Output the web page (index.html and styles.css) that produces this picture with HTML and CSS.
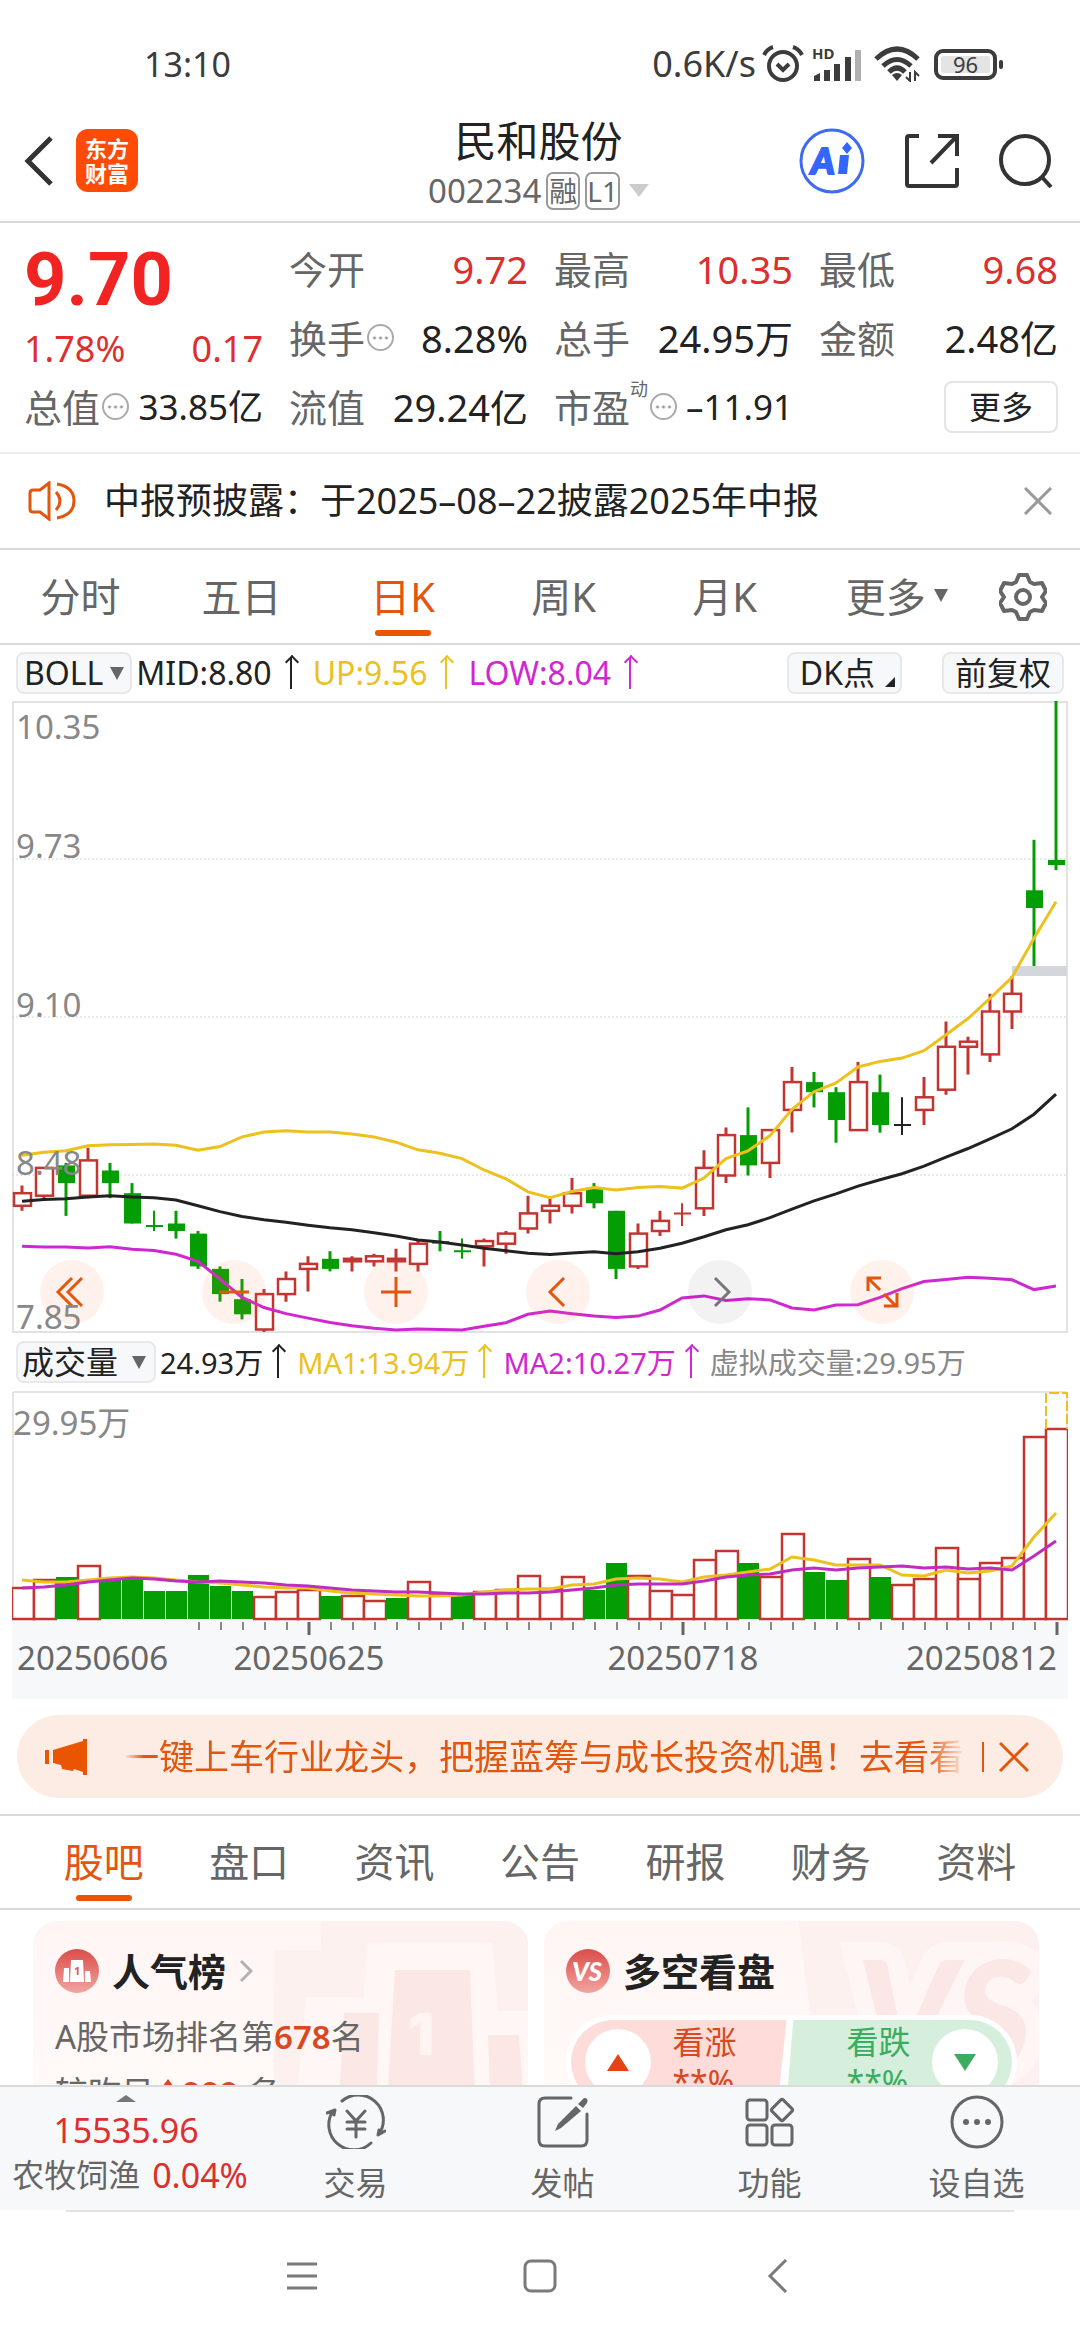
FILE: index.html
```html
<!DOCTYPE html>
<html lang="zh-CN">
<head>
    <meta charset="UTF-8">
    <meta name="viewport" content="width=device-width, initial-scale=1.0">
    <title>民和股份 002234</title>
    <link rel="stylesheet" href="styles.css">
</head>
<body>
    <div class="status-bar">
        <span class="clock">13:10</span>
        <span class="speed">0.6K/s</span>
        <svg class="alarm" width="42" height="40" viewBox="0 0 42 40" fill="none" stroke="#3c3c3c" stroke-width="4">
            <circle cx="21" cy="22" r="14"/>
            <path d="M15 20l6 6 6-6M2 11q3-6 9-8M40 11q-3-6-9-8"/>
        </svg>
        <svg class="signal" width="50" height="36" viewBox="0 0 50 36">
            <text x="0" y="13" font-size="15" font-weight="700" fill="#3c3c3c">HD</text>
            <path d="M2 35v-5l6-3v8zM12 35v-11h6v11zM22 35v-17h6v17zM33 35v-24h6v24z" fill="#3c3c3c"/>
            <path d="M43 35v-31h6v31z" fill="#b0b0b0"/>
        </svg>
        <svg class="wifi" width="48" height="36" viewBox="0 0 48 36" fill="none" stroke="#3c3c3c" stroke-width="5">
            <path d="M2 13q21-20 42 0M9 20q14-13 28 0M15 26q8-8 16 0"/>
            <path d="M23 35l-5-6q5-4 10 0z" fill="#3c3c3c" stroke="none"/>
            <path d="M36 26v9l-4-4M41 35v-9l4 4" stroke-width="2"/>
        </svg>
        <span class="battery">96</span>
    </div>

    <header class="header">
        <div class="header-left">
            <button class="icon-btn" aria-label="返回">
                <svg width="30" height="50" viewBox="0 0 30 50" fill="none" stroke="#333" stroke-width="5"><path d="M27 2L4 25l23 23"/></svg>
            </button>
            <a class="app-logo" href="#">东方<br>财富</a>
        </div>
        <div class="stock">
            <h1>民和股份</h1>
            <div class="stock-code">002234 <span class="tag">融</span><span class="tag">L1</span><i class="caret-down big"></i></div>
        </div>
        <div class="header-right">
            <button class="icon-btn" aria-label="AI">
                <svg width="66" height="66" viewBox="0 0 66 66">
                    <circle cx="33" cy="33" r="31" fill="#fff" stroke="#3d6bf2" stroke-width="3"/>
                    <text x="12" y="46" font-size="36" font-weight="900" font-style="italic" font-family="Lato" fill="#3366ff" stroke="#3366ff" stroke-width="2">A</text>
                    <path d="M41 27h9l-2 19h-9zM48 14l5 6-5 6-5-6z" fill="#3366ff"/>
                </svg>
            </button>
            <button class="icon-btn" aria-label="分享">
                <svg width="54" height="54" viewBox="0 0 54 54" fill="none" stroke="#333" stroke-width="4"><path d="M14 2H4q-2 0-2 2v46q0 2 2 2h46q2 0 2-2V34M33 2h19v20M52 2L26 29"/></svg>
            </button>
            <button class="icon-btn" aria-label="搜索">
                <svg width="54" height="54" viewBox="0 0 54 54" fill="none" stroke="#333" stroke-width="4"><circle cx="26" cy="26" r="24"/><path d="M42 42l10 11"/></svg>
            </button>
        </div>
    </header>

    <section class="quote">
        <div class="quote-col first">
            <strong class="price">9.70</strong>
            <div class="item up change"><span>1.78%</span><span>0.17</span></div>
            <div class="item small"><label>总值<i class="dots"></i></label><span>33.85亿</span></div>
        </div>
        <div class="quote-col">
            <div class="item"><label>今开</label><span class="up">9.72</span></div>
            <div class="item"><label>换手<i class="dots"></i></label><span>8.28%</span></div>
            <div class="item"><label>流值</label><span>29.24亿</span></div>
        </div>
        <div class="quote-col">
            <div class="item"><label>最高</label><span class="up">10.35</span></div>
            <div class="item"><label>总手</label><span>24.95万</span></div>
            <div class="item pe"><label>市盈<sup>动</sup><i class="dots"></i></label><span>–11.91</span></div>
        </div>
        <div class="quote-col">
            <div class="item"><label>最低</label><span class="up">9.68</span></div>
            <div class="item"><label>金额</label><span>2.48亿</span></div>
            <div class="item"><button class="more">更多</button></div>
        </div>
    </section>

    <div class="notice">
        <svg width="48" height="40" viewBox="0 0 48 40" fill="none" stroke="#e2560e" stroke-width="3">
            <path d="M21 2v36l-9-7H5q-3 0-3-3V12q0-3 3-3h7zM28 11q8 9 0 18M29 3q17 3 17 17t-17 17"/>
        </svg>
        <a href="#">中报预披露：于2025–08–22披露2025年中报</a>
        <button class="icon-btn" aria-label="关闭">
            <svg width="28" height="28" viewBox="0 0 28 28" stroke="#999" stroke-width="3"><path d="M1 1l26 26M27 1L1 27"/></svg>
        </button>
    </div>

    <nav class="periods">
        <button>分时</button>
        <button>五日</button>
        <button class="active">日K</button>
        <button>周K</button>
        <button>月K</button>
        <button>更多<i class="caret-down"></i></button>
        <button aria-label="设置">
            <svg width="48" height="48" viewBox="0 0 48 48" fill="none" stroke="#666" stroke-width="4" stroke-linejoin="round">
                <path d="M20 2h8l3 7 4 2 8-1 4 8-4 6 4 6-4 8-8-1-4 2-3 7h-8l-3-7-4-2-8 1-4-8 4-6-4-6 4-8 8 1 4-2z"/>
                <circle cx="24" cy="24" r="7"/>
            </svg>
        </button>
    </nav>

    <section class="chart">
        <div class="legend">
            <button class="chip">BOLL<i class="caret-down"></i></button>
            <span class="val">MID:8.80<i class="arrow"></i></span>
            <span class="val yellow">UP:9.56<i class="arrow"></i></span>
            <span class="val purple">LOW:8.04<i class="arrow"></i></span>
            <button class="chip dk">DK点<i class="corner"></i></button>
            <button class="chip">前复权</button>
        </div>
        <div class="kline">
            <svg id="kline" viewBox="0 0 1056 632"></svg>
            <div class="tools">
                <button aria-label="最早"><svg viewBox="0 0 64 64"><path d="M32 18L18 32l14 14M42 18L28 32l14 14"/></svg></button>
                <button aria-label="缩小"><svg viewBox="0 0 64 64"><path d="M17 32h30"/></svg></button>
                <button aria-label="放大"><svg viewBox="0 0 64 64"><path d="M17 32h30M32 17v30"/></svg></button>
                <button aria-label="左移"><svg viewBox="0 0 64 64"><path d="M38 18L24 32l14 14"/></svg></button>
                <button aria-label="右移" class="off"><svg viewBox="0 0 64 64"><path d="M27 18l14 14-14 14"/></svg></button>
                <button aria-label="全屏"><svg viewBox="0 0 64 64"><path d="M18 31V18h13M18 18l12 12M47 33v13H34M46 46L34 34"/></svg></button>
            </div>
            <svg id="scale" viewBox="0 0 1056 632"></svg>
        </div>
        <div class="legend volume-legend">
            <button class="chip">成交量<i class="caret-down"></i></button>
            <span class="val">24.93万<i class="arrow"></i></span>
            <span class="val yellow">MA1:13.94万<i class="arrow"></i></span>
            <span class="val purple">MA2:10.27万<i class="arrow"></i></span>
            <span class="val gray">虚拟成交量:29.95万</span>
        </div>
        <svg id="volume" class="volume" viewBox="0 0 1056 308"></svg>
    </section>

    <div class="promo">
        <svg width="42" height="36" viewBox="0 0 42 36" fill="#ea5504">
            <path d="M0 11h4v14H0zM8 11L38 2V0h4v36h-4v-3l-9-3-1 2-11-2-1-4-8-2z"/>
        </svg>
        <a href="#">一键上车行业龙头，把握蓝筹与成长投资机遇！去看看</a>
        <button class="icon-btn" aria-label="关闭">
            <svg width="30" height="30" viewBox="0 0 30 30" stroke="#e2560e" stroke-width="3"><path d="M1 1l28 28M29 1L1 29"/></svg>
        </button>
    </div>

    <nav class="sections">
        <button class="active">股吧</button>
        <button>盘口</button>
        <button>资讯</button>
        <button>公告</button>
        <button>研报</button>
        <button>财务</button>
        <button>资料</button>
    </nav>

    <main class="cards">
        <article class="card">
            <svg class="card-bg" width="495" height="200" viewBox="0 0 495 200">
                <path d="M288 0h207v200H241V29h47z" fill="#fdf1ef"/>
                <path d="M335 22h124l6 68h30v110H262l11-124h58z" fill="#fef7f5"/>
                <path d="M362 49h75l6 151h-90zM311 92h35l-3 108h-38zM455 114h31l6 86h-34z" fill="#fbe8e5"/>
                <text x="375" y="134" font-size="58" font-weight="900" font-family="Inter" fill="#fef4f2">1</text>
            </svg>
            <h2>
                <svg width="44" height="44" viewBox="0 0 44 44">
                    <circle cx="22" cy="22" r="22" fill="url(#badge)"/>
                    <path d="M16 11h12l1 22H15zM9 19h5v14H8zM30 22h5l1 11h-6z" fill="#fff"/>
                    <text x="19" y="26" font-size="11" font-weight="700" fill="#dc5a54">1</text>
                    <defs><linearGradient id="badge" x2="0" y2="1"><stop stop-color="#da4c48"/><stop offset="1" stop-color="#f2a5a0"/></linearGradient></defs>
                </svg>
                人气榜
                <svg width="14" height="24" viewBox="0 0 14 24" fill="none" stroke="#b5b0af" stroke-width="3"><path d="M2 2l10 10L2 22"/></svg>
            </h2>
            <p>A股市场排名第<b>678</b>名</p>
            <p>较昨日<i class="rise"></i><b>999</b> 名</p>
        </article>
        <article class="card">
            <svg class="card-bg" width="495" height="200" viewBox="0 0 495 200">
                <path d="M254 0h241v200H280z" fill="#fdf1ef"/>
                <text x="312" y="150" font-size="152" font-weight="900" font-style="italic" font-family="Lato" fill="#fbe8e6" stroke="#fef6f5" stroke-width="36" paint-order="stroke">VS</text>
            </svg>
            <h2>
                <svg width="44" height="44" viewBox="0 0 44 44">
                    <circle cx="22" cy="22" r="22" fill="url(#badge)"/>
                    <text x="6" y="32" font-size="26" font-weight="900" font-style="italic" font-family="Lato" fill="#fff">VS</text>
                </svg>
                多空看盘
            </h2>
            <div class="vote">
                <button class="bull"><span class="knob"><i class="tri"></i></span><span>看涨<br>**%</span></button>
                <button class="bear"><span>看跌<br>**%</span><span class="knob"><i class="tri"></i></span></button>
            </div>
        </article>
    </main>

    <footer class="toolbar">
        <a class="index" href="#">
            <i class="caret-up"></i>
            <span class="up">15535.96</span>
            <span class="sector">农牧饲渔<span class="up">0.04%</span></span>
        </a>
        <button>
            <svg width="60" height="54" viewBox="0 0 60 54" fill="none" stroke="#666" stroke-width="3" stroke-linecap="round" stroke-linejoin="round">
                <path d="M16 6A25 25 0 0 1 53 39M45 48A25 25 0 0 1 7 16M1 18l8-3-1 5M59 36l-7 4 1-5M21 16l9 10 9-10M30 26v16M21 27h18M21 34h18"/>
            </svg>
            交易
        </button>
        <button>
            <svg width="54" height="54" viewBox="0 0 54 54" fill="none" stroke="#666" stroke-width="3" stroke-linecap="round">
                <path d="M35 3H9q-6 0-6 6v36q0 6 6 6h36q6 0 6-6V19"/>
                <path d="M42 9l6-6q5 0 3 5l-4 5zM40 11l5 5-20 17-6 3 3-7z" fill="#666" stroke="none"/>
            </svg>
            发帖
        </button>
        <button>
            <svg width="54" height="54" viewBox="0 0 54 54" fill="none" stroke="#666" stroke-width="3" stroke-linejoin="round">
                <rect x="4" y="5" width="20" height="20" rx="3"/><rect x="4" y="30" width="20" height="20" rx="3"/><rect x="29" y="30" width="20" height="20" rx="3"/>
                <rect x="31" y="7" width="16" height="16" rx="2" transform="rotate(45 39 15)"/>
            </svg>
            功能
        </button>
        <button>
            <svg width="54" height="54" viewBox="0 0 54 54" fill="none" stroke="#666" stroke-width="3">
                <circle cx="27" cy="27" r="25"/>
                <g fill="#666" stroke="none"><circle cx="16" cy="27" r="3"/><circle cx="27" cy="27" r="3"/><circle cx="38" cy="27" r="3"/></g>
            </svg>
            设自选
        </button>
    </footer>

    <div class="system-nav">
        <button aria-label="任务"><svg width="34" height="34" viewBox="0 0 34 34" fill="none" stroke="#7a7a7a" stroke-width="3"><path d="M2 5h30M2 17h30M2 29h30"/></svg></button>
        <button aria-label="主页"><svg width="34" height="34" viewBox="0 0 34 34" fill="none" stroke="#7a7a7a" stroke-width="3"><rect x="2" y="2" width="30" height="30" rx="6"/></svg></button>
        <button aria-label="后退"><svg width="34" height="34" viewBox="0 0 34 34" fill="none" stroke="#7a7a7a" stroke-width="3"><path d="M25 1L9 17l16 16"/></svg></button>
    </div>

    <script src="chart.js"></script>
</body>
</html>
```
FILE: styles.css
```css
* {
    box-sizing: border-box;
}
body {
    margin: 0;
    height: 100vh;
    display: flex;
    flex-direction: column;
    overflow: hidden;
    background: #fff;
    color: #222;
    font-family: "Noto Sans", "Noto Sans CJK SC", sans-serif;
    font-size: 38px;
    line-height: 1;
}
body > * {
    flex-shrink: 0;
}
button {
    font: inherit;
    color: inherit;
    background: none;
    border: 0;
    padding: 0;
    cursor: pointer;
}
a {
    color: inherit;
    text-decoration: none;
}
svg {
    display: block;
    flex-shrink: 0;
}
h1, h2, p {
    margin: 0;
    font-weight: 400;
}
.icon-btn {
    display: flex;
}
.up {
    color: #dc2f2e;
}
.yellow {
    color: #ecc11e;
}
.purple {
    color: #cf28cf;
}
.gray {
    color: #888;
}

/* small triangles */
.caret-down, .caret-up {
    display: inline-block;
    border: 7px solid transparent;
    border-top: 13px solid #666;
    border-bottom: 0;
}
.caret-down.big {
    border-width: 13px 10px 0;
    border-top-color: #ccc;
    margin-left: 4px;
}
.caret-up {
    border-width: 0 10px 7px;
    border-bottom: 7px solid #777;
}

.status-bar {
    display: flex;
    align-items: center;
    height: 108px;
    padding: 20px 77px 0 144px;
    color: #3c3c3c;
    font-size: 36px;
}
.clock {
    flex: 1;
    font-size: 34px;
}
.alarm {
    margin: 0 8px 0 6px;
}
.wifi {
    margin: 0 12px;
}
.battery {
    position: relative;
    width: 63px;
    height: 31px;
    margin-right: 6px;
    border: 4px solid #3c3c3c;
    border-radius: 9px;
    background: #e4e4e4;
    box-shadow: inset 0 0 0 3px #fff;
    font-size: 22px;
    line-height: 23px;
    text-align: center;
}
.battery::after {
    content: "";
    position: absolute;
    right: -10px;
    top: 7px;
    width: 4px;
    height: 9px;
    border-radius: 2px;
    background: #3c3c3c;
}

.header {
    display: grid;
    grid-template-columns: 1fr auto 1fr;
    align-items: center;
    height: 115px;
    padding: 0 27px 8px 24px;
    border-bottom: 2px solid #dadada;
}
.header-left, .header-right {
    display: flex;
    align-items: center;
}
.header-left {
    gap: 22px;
}
.header-right {
    justify-content: flex-end;
    gap: 40px;
}
.app-logo {
    width: 62px;
    height: 63px;
    padding-top: 7px;
    border-radius: 12px;
    background: #ff4b05;
    color: #fff;
    font-size: 22px;
    font-weight: 700;
    line-height: 25px;
    text-align: center;
}
.stock {
    padding-top: 4px;
    text-align: center;
}
.stock h1 {
    font-size: 42px;
    line-height: 56px;
}
.stock-code {
    display: flex;
    align-items: center;
    gap: 5px;
    height: 44px;
    color: #666;
    font-size: 33px;
}
.tag {
    min-width: 34px;
    height: 38px;
    border: 2px solid #999;
    border-radius: 7px;
    font-size: 28px;
    line-height: 34px;
    text-align: center;
}

.quote {
    display: grid;
    grid-template-columns: repeat(4, 1fr);
    gap: 26px;
    padding: 11px 22px 11px 24px;
    border-bottom: 2px solid #ececec;
}
.item {
    display: flex;
    justify-content: space-between;
    align-items: center;
    height: 69px;
    white-space: nowrap;
}
.item label {
    display: flex;
    align-items: center;
    color: #666;
}
.item sup {
    align-self: flex-start;
    margin-top: -8px;
    font-size: 18px;
    line-height: 18px;
}
.item.small span, .item.pe span {
    font-size: 35px;
}
.first {
    display: flex;
    flex-direction: column;
}
.price {
    height: 92px;
    color: #f22323;
    font-family: Roboto, sans-serif;
    font-size: 74px;
    line-height: 92px;
}
.change {
    height: 46px;
    font-size: 36px;
}
.dots {
    width: 27px;
    height: 27px;
    margin-left: 2px;
    border: 2px solid #aaa;
    border-radius: 50%;
    background: radial-gradient(circle, #999 1px, transparent 2px) center / 6px 6px content-box;
    padding: 9px 3px 8px 3px;
}
.more {
    width: 114px;
    height: 52px;
    margin-left: auto;
    border: 2px solid #e4e4e4;
    border-radius: 8px;
    font-size: 32px;
}

.notice {
    display: flex;
    align-items: center;
    height: 96px;
    padding: 0 28px;
    border-bottom: 2px solid #dadada;
    font-size: 36px;
}
.notice a {
    flex: 1;
    margin-left: 28px;
}

.periods, .sections {
    display: grid;
    height: 95px;
    border-bottom: 2px solid #dadada;
    color: #666;
    font-size: 40px;
}
.periods {
    grid-template-columns: repeat(6, 17fr) 12fr;
}
.periods button, .sections button {
    position: relative;
    display: flex;
    align-items: center;
    justify-content: center;
}
.periods .caret-down {
    position: absolute;
    right: 18px;
    top: 39px;
}
.active {
    color: #e2560e;
}
.active::after {
    content: "";
    position: absolute;
    bottom: 7px;
    left: calc(50% - 28px);
    width: 56px;
    height: 6px;
    border-radius: 3px;
    background: #ea5504;
}

.chart {
    padding: 0 12px;
}
.legend {
    display: flex;
    align-items: center;
    height: 56px;
    padding: 0 4px;
    font-size: 32px;
    white-space: nowrap;
}
.chip {
    display: flex;
    align-items: center;
    height: 42px;
    padding: 0 11px;
    border: 2px solid #e6e8ec;
    border-radius: 8px;
    background: #f7f8fa;
}
.chip:first-child {
    padding: 0 6px;
    margin-right: 4px;
}
.chip .caret-down {
    margin-left: 7px;
}
.chip.dk {
    margin: 0 40px 0 auto;
    padding: 0 5px 0 11px;
}
.corner {
    align-self: flex-end;
    margin: 0 0 5px 10px;
    border: 5px solid transparent;
    border-right-color: #222;
    border-bottom-color: #222;
}
.val {
    display: flex;
    align-items: center;
}
.arrow {
    position: relative;
    width: 2px;
    height: 32px;
    margin: 0 21px 0 18px;
    background: currentColor;
}
.arrow::before {
    content: "";
    position: absolute;
    left: -3px;
    top: 0;
    width: 8px;
    height: 8px;
    border: solid currentColor;
    border-width: 2px 0 0 2px;
    transform: rotate(45deg);
}
.volume-legend {
    height: 58px;
}
.volume-legend .val {
    font-size: 29px;
}
.volume-legend .chip:first-child {
    padding: 0 8px 0 4px;
}
.volume-legend .caret-down {
    margin-left: 14px;
}
.volume-legend .arrow {
    margin: 0 18px 0 14px;
}
.kline {
    position: relative;
}
.kline > svg, .volume {
    width: 100%;
}
#scale {
    position: absolute;
    top: 0;
    left: 0;
    pointer-events: none;
}
.tools {
    position: absolute;
    left: 28px;
    bottom: 9px;
    display: flex;
    gap: 98px;
}
.tools button {
    width: 64px;
    height: 64px;
    border-radius: 50%;
    background: rgba(255, 120, 60, .1);
}
.tools path {
    fill: none;
    stroke: #e2560e;
    stroke-width: 3;
}
.tools .off {
    background: rgba(0, 0, 0, .05);
}
.tools .off path {
    stroke: #777;
}

.promo {
    display: flex;
    align-items: center;
    height: 83px;
    margin: 16px 17px;
    padding: 0 34px 0 28px;
    border-radius: 42px;
    background: #fcece3;
    color: #e2560e;
    font-size: 35px;
}
.promo a {
    flex: 1;
    margin: 0 16px 0 37px;
    white-space: nowrap;
    overflow: hidden;
    line-height: 50px;
    -webkit-mask-image: linear-gradient(90deg, transparent, #000 20px, #000 calc(100% - 40px), transparent);
    mask-image: linear-gradient(90deg, transparent, #000 20px, #000 calc(100% - 40px), transparent);
}
.promo .icon-btn {
    padding-left: 15px;
    border-left: 2px solid #e2560e;
}

.sections {
    grid-template-columns: repeat(7, 1fr);
    height: 96px;
    padding: 0 31px;
    border-top: 2px solid #dadada;
}

.cards {
    flex: 1 1 0;
    min-height: 0;
    overflow: hidden;
    display: grid;
    grid-template-columns: 1fr 1fr;
    gap: 16px;
    padding: 11px 41px 0 33px;
}
.card {
    position: relative;
    height: 200px;
    padding: 28px 22px;
    border-radius: 24px;
    background: linear-gradient(#fff6f4, #fffaf9);
    overflow: hidden;
}
.card-bg {
    position: absolute;
    top: 0;
    right: 0;
}
.card h2 {
    position: relative;
    display: flex;
    align-items: center;
    gap: 13px;
    height: 44px;
    font-size: 38px;
    font-weight: 600;
}
.card p {
    position: relative;
    color: #666;
    font-size: 33px;
    line-height: 56px;
}
.card h2 + p {
    margin-top: 16px;
}
.card b {
    color: #d9481f;
    font-weight: 600;
}
.rise {
    display: inline-block;
    margin: 0 2px;
    border: 12px solid transparent;
    border-top: 0;
    border-bottom: 16px solid #d9481f;
    vertical-align: 10px;
}
.vote {
    position: relative;
    display: flex;
    height: 94px;
    margin-top: 22px;
    border: 5px solid #fff;
    border-radius: 47px;
    background: #fff;
    overflow: hidden;
    font-size: 32px;
}
.vote button {
    flex: 1;
    display: flex;
    align-items: center;
    justify-content: space-between;
    padding: 0 14px;
    line-height: 40px;
    text-align: left;
}
.bull {
    background: #fddcd9;
    color: #d9481f;
    clip-path: polygon(0 0, 100% 0, 96% 100%, 0 100%);
}
.bear {
    background: #d6efdc;
    color: #3bad60;
    clip-path: polygon(3% 0, 100% 0, 100% 100%, 0 100%);
}
.vote .bull {
    padding-right: 50px;
}
.vote .bear {
    padding-left: 60px;
}
.knob {
    display: grid;
    place-items: center;
    width: 66px;
    height: 66px;
    border-radius: 50%;
    background: #fff;
}
.tri {
    border: 11px solid transparent;
    border-top: 0;
    border-bottom: 17px solid #e44413;
}
.bear .tri {
    border-top: 17px solid #3bad60;
    border-bottom: 0;
}

.toolbar {
    display: grid;
    grid-template-columns: 252px repeat(4, 1fr);
    height: 125px;
    border-top: 2px solid #dadada;
    background: #f7f8fa;
    color: #666;
    font-size: 32px;
}
.toolbar button {
    display: flex;
    flex-direction: column;
    align-items: center;
    gap: 18px;
    padding-top: 8px;
}
.index {
    display: flex;
    flex-direction: column;
    align-items: center;
    gap: 11px;
    padding-top: 8px;
    white-space: nowrap;
}
.index .up {
    font-size: 34px;
}
.sector {
    display: flex;
    align-items: center;
    gap: 12px;
    padding-left: 8px;
}

.system-nav {
    display: flex;
    justify-content: center;
    gap: 204px;
    height: 130px;
    margin: 0 66px;
    border-top: 2px solid #e2e2e2;
}
```
FILE: chart.js
```js
// [type, body top, body bottom, high, low, volume, volume colour]
const days = [
    ['r', 8.40, 8.35, 8.43, 8.33, 4.12, 'r'],
    ['r', 8.50, 8.39, 8.50, 8.37, 5.17, 'r'],
    ['g', 8.51, 8.44, 8.52, 8.31, 5.53, 'g'],
    ['r', 8.53, 8.39, 8.58, 8.38, 6.97, 'r'],
    ['g', 8.49, 8.44, 8.52, 8.38, 5.35, 'g'],
    ['g', 8.40, 8.28, 8.44, 8.28, 5.44, 'g'],
    ['g', 8.27, 8.27, 8.33, 8.25, 3.73, 'g'],
    ['g', 8.28, 8.25, 8.33, 8.22, 3.73, 'g'],
    ['g', 8.24, 8.11, 8.25, 8.10, 5.83, 'g'],
    ['g', 8.10, 8.00, 8.11, 7.97, 4.34, 'g'],
    ['g', 7.98, 7.92, 8.06, 7.90, 3.68, 'g'],
    ['r', 8.00, 7.86, 8.02, 7.85, 2.85, 'r'],
    ['r', 8.06, 8.00, 8.09, 7.97, 3.60, 'r'],
    ['r', 8.12, 8.10, 8.15, 8.01, 3.86, 'r'],
    ['g', 8.14, 8.10, 8.17, 8.09, 3.07, 'g'],
    ['r', 8.14, 8.13, 8.15, 8.09, 2.98, 'r'],
    ['r', 8.15, 8.13, 8.16, 8.11, 2.37, 'r'],
    ['r', 8.14, 8.13, 8.18, 8.09, 2.72, 'g'],
    ['r', 8.20, 8.12, 8.21, 8.09, 4.87, 'r'],
    ['g', 8.21, 8.20, 8.25, 8.17, 3.20, 'r'],
    ['g', 8.17, 8.17, 8.22, 8.14, 3.16, 'g'],
    ['r', 8.21, 8.19, 8.22, 8.11, 3.51, 'r'],
    ['r', 8.24, 8.20, 8.25, 8.16, 3.86, 'r'],
    ['r', 8.32, 8.26, 8.39, 8.24, 5.66, 'r'],
    ['r', 8.35, 8.33, 8.38, 8.28, 3.99, 'r'],
    ['r', 8.40, 8.35, 8.46, 8.32, 5.53, 'r'],
    ['g', 8.42, 8.36, 8.44, 8.34, 3.86, 'g'],
    ['g', 8.33, 8.10, 8.33, 8.06, 7.41, 'g'],
    ['r', 8.24, 8.11, 8.28, 8.10, 5.66, 'r'],
    ['r', 8.29, 8.25, 8.33, 8.23, 3.68, 'r'],
    ['r', 8.32, 8.32, 8.36, 8.27, 3.16, 'r'],
    ['r', 8.50, 8.34, 8.57, 8.31, 7.76, 'r'],
    ['r', 8.63, 8.47, 8.66, 8.44, 8.95, 'r'],
    ['g', 8.63, 8.51, 8.74, 8.47, 7.41, 'g'],
    ['r', 8.65, 8.52, 8.65, 8.46, 5.53, 'r'],
    ['r', 8.84, 8.73, 8.90, 8.64, 11.18, 'r'],
    ['g', 8.84, 8.80, 8.88, 8.74, 6.14, 'g'],
    ['g', 8.80, 8.69, 8.82, 8.60, 5.13, 'g'],
    ['r', 8.84, 8.65, 8.92, 8.65, 7.89, 'r'],
    ['g', 8.80, 8.67, 8.87, 8.64, 5.57, 'g'],
    ['k', 8.67, 8.67, 8.78, 8.63, 4.47, 'r'],
    ['r', 8.78, 8.73, 8.86, 8.67, 5.31, 'r'],
    ['r', 8.98, 8.81, 9.08, 8.79, 9.34, 'r'],
    ['r', 9.00, 8.98, 9.02, 8.87, 5.31, 'r'],
    ['r', 9.12, 8.95, 9.19, 8.92, 7.37, 'r'],
    ['r', 9.19, 9.12, 9.26, 9.05, 8.02, 'r'],
    ['g', 9.60, 9.53, 9.80, 9.30, 23.90, 'r'],
    ['g', 9.72, 9.70, 10.35, 9.68, 24.93, 'r']
];
const boll = {
    up: [8.550, 8.562, 8.568, 8.588, 8.592, 8.593, 8.595, 8.590, 8.570, 8.585, 8.623, 8.642, 8.647, 8.642, 8.642, 8.635,
        8.623, 8.602, 8.572, 8.558, 8.537, 8.492, 8.457, 8.405, 8.382, 8.407, 8.422, 8.413, 8.422, 8.427, 8.420, 8.460,
        8.537, 8.568, 8.628, 8.732, 8.802, 8.837, 8.900, 8.922, 8.935, 8.965, 9.028, 9.092, 9.172, 9.255, 9.410, 9.555],
    mid: [8.368, 8.375, 8.378, 8.385, 8.390, 8.385, 8.382, 8.373, 8.350, 8.327, 8.308, 8.295, 8.285, 8.273, 8.263, 8.255,
        8.243, 8.230, 8.215, 8.207, 8.195, 8.182, 8.172, 8.162, 8.157, 8.163, 8.168, 8.160, 8.168, 8.182, 8.202, 8.227,
        8.255, 8.275, 8.303, 8.337, 8.370, 8.397, 8.428, 8.453, 8.477, 8.507, 8.543, 8.577, 8.615, 8.655, 8.713, 8.792],
    low: [8.190, 8.187, 8.187, 8.183, 8.188, 8.178, 8.173, 8.158, 8.130, 8.060, 7.987, 7.947, 7.923, 7.905, 7.888, 7.875,
        7.865, 7.858, 7.862, 7.860, 7.858, 7.873, 7.887, 7.920, 7.933, 7.922, 7.913, 7.907, 7.913, 7.937, 7.985, 7.993,
        7.975, 7.982, 7.977, 7.945, 7.937, 7.957, 7.958, 7.987, 8.022, 8.050, 8.058, 8.067, 8.063, 8.057, 8.018, 8.032]
};
const ma1 = [5.17, 4.91, 4.91, 5.13, 5.39, 5.57, 5.39, 5.13, 4.82, 4.69, 4.52, 4.25, 4.08, 4.03, 3.73, 3.46,
    3.29, 3.16, 3.03, 3.07, 3.16, 3.60, 3.77, 3.95, 3.99, 4.47, 4.60, 5.31, 5.35, 5.22, 4.82, 5.53,
    5.83, 6.23, 6.58, 8.11, 7.81, 7.06, 7.15, 7.15, 5.79, 5.66, 6.45, 6.01, 6.36, 7.02, 10.83, 13.94];
const ma2 = [4.12, 4.21, 4.47, 4.82, 5.13, 5.35, 5.22, 4.96, 4.91, 4.96, 4.91, 4.74, 4.52, 4.30, 4.03, 3.86,
    3.68, 3.60, 3.51, 3.38, 3.33, 3.33, 3.38, 3.46, 3.60, 3.86, 4.03, 4.47, 4.56, 4.60, 4.60, 5.04,
    5.57, 5.74, 5.92, 6.49, 6.67, 6.45, 6.67, 6.88, 6.97, 6.75, 6.80, 6.58, 6.75, 6.49, 8.29, 10.27];

const colors = { r: '#c23531', g: '#049e04', k: '#222' };
const x = i => 10 + i * 22;
const y = p => Math.round((10.35 - p) / 2.5 * 631 * 10) / 10;
const vy = v => Math.round(228 - v / 29.95 * 228);
const line = (vals, fy, color) =>
    `<polyline fill="none" stroke="${color}" stroke-width="3" points="${vals.map((v, i) => x(i) + ',' + fy(v)).join(' ')}"/>`;

function drawKline() {
    let s = '<rect x="1" y="1" width="1054" height="630" fill="#fff" stroke="#e2e2e2" stroke-width="2"/>';
    for (const gy of [158, 316, 474]) {
        s += `<path d="M0 ${gy}H1056" stroke="#d4d4d4" stroke-dasharray="2 2"/>`;
    }
    s += '<rect x="1000" y="265" width="55" height="10" fill="#d3d7dc"/>';
    days.forEach(([t, top, bot, hi, lo], i) => {
        const c = colors[t], cx = x(i), a = y(top), b = y(bot);
        if (top === bot) {
            s += `<path d="M${cx} ${y(hi)}V${y(lo)}M${cx - 8} ${a}h17" stroke="${c}" stroke-width="2"/>`;
        } else if (t === 'g') {
            s += `<path d="M${cx} ${y(hi)}V${y(lo)}" stroke="${c}" stroke-width="3"/>`;
            s += `<rect x="${cx - 8}" y="${a}" width="17" height="${b - a}" fill="${c}"/>`;
        } else {
            s += `<path d="M${cx} ${y(hi)}V${a}M${cx} ${b}V${y(lo)}" stroke="${c}" stroke-width="3"/>`;
            s += `<rect x="${cx - 8}" y="${a}" width="17" height="${b - a}" fill="#fff" stroke="${c}" stroke-width="2.5"/>`;
        }
    });
    s += line(boll.up, y, '#ecc11e') + line(boll.mid, y, '#222') + line(boll.low, y, '#cf28cf');
    document.getElementById('kline').innerHTML = s;

    const labels = [['10.35', 38], ['9.73', 157], ['9.10', 316], ['8.48', 474], ['7.85', 628]];
    document.getElementById('scale').innerHTML = labels.map(([t, ty]) =>
        `<text x="4" y="${ty}" font-size="33" fill="#888">${t}</text>`).join('');
}

function drawVolume() {
    let s = '<rect y="229" width="1056" height="79" fill="#f7f8fa"/>';
    s += '<path d="M1 229V1H1055V229" fill="#fff" stroke="#ccc"/>';
    s += '<text x="1" y="44" font-size="33" fill="#888">29.95万</text>';
    days.forEach(([, , , , , vol, t], i) => {
        const top = vy(vol);
        s += t === 'g'
            ? `<rect x="${x(i) - 10}" y="${top}" width="21" height="${228 - top}" fill="${colors.g}"/>`
            : `<rect x="${x(i) - 10}" y="${top}" width="22" height="${228 - top}" fill="#fff" stroke="${colors.r}" stroke-width="2.5"/>`;
    });
    s += '<path d="M1034 38V2H1055V38" fill="none" stroke="#ecc11e" stroke-width="2" stroke-dasharray="10 3"/>';
    s += line(ma1, vy, '#ecc11e') + line(ma2, vy, '#c02cc0');
    for (let tx = 187; tx < 1050; tx += 22) {
        s += `<path d="M${tx} 231v8" stroke="#888" stroke-width="2"/>`;
    }
    s += '<path d="M297 231v13M671 231v13M1045 231v13" stroke="#666" stroke-width="3"/>';
    const dates = [['20250606', 5, 'start'], ['20250625', 297, 'middle'], ['20250718', 671, 'middle'], ['20250812', 1045, 'end']];
    dates.forEach(([t, tx, anchor]) => {
        s += `<text x="${tx}" y="279" font-size="33" fill="#666" text-anchor="${anchor}">${t}</text>`;
    });
    document.getElementById('volume').innerHTML = s;
}

drawKline();
drawVolume();
```
